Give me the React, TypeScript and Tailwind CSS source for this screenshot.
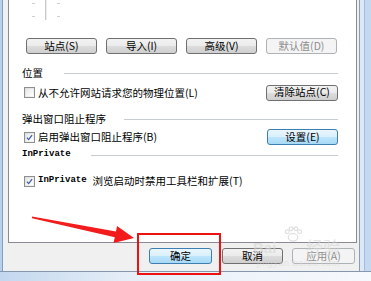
type Kind = "normal" | "blue" | "disabled";

function Btn({ label, w, kind = "normal" }: { label: string; w: string; kind?: Kind }) {
  const look =
    kind === "blue"
      ? "border-[#3c7fb1] bg-[linear-gradient(#eaf6fd,#d9f0fc_50%,#bee6fd_50%,#a7d9f5)] text-black"
      : kind === "disabled"
      ? "border-[#adb2b5] bg-[#f4f4f4] text-[#8d8d8d]"
      : "border-[#707070] bg-[linear-gradient(#f2f2f2,#ebebeb_50%,#dddddd_50%,#cfcfcf)] text-black";
  return (
    <div className={`${w} h-[16px] shrink-0 rounded-[3px] border flex items-center justify-center leading-none ${look}`}>
      {label}
    </div>
  );
}

function Check({ checked }: { checked?: boolean }) {
  return (
    <div className="w-[11px] h-[11px] border border-[#8e8f8f] bg-[linear-gradient(135deg,#dcdcdc,#f6f6f6)] p-[1px] shrink-0">
      <div className="w-full h-full bg-[linear-gradient(135deg,#e8e8e8,#ffffff)] flex items-center justify-center">
        {checked && (
          <svg width="9" height="9" viewBox="0 0 9 9">
            <path d="M1.2 4.6 L3.4 7.2 L7.8 1.4" fill="none" stroke="#3a5ea8" strokeWidth="1.6" />
          </svg>
        )}
      </div>
    </div>
  );
}

function Header({ children, ml }: { children: React.ReactNode; ml: string }) {
  return (
    <div className="flex items-center h-[18px] pl-[13px] pr-[18px]">
      {children}
      <div className={`flex-1 h-px bg-[#c5ccd3] ${ml}`} />
    </div>
  );
}

export default function App() {
  return (
    <div className="relative w-[371px] h-[281px] overflow-hidden bg-[#d6e4f3] font-['Noto_Sans_CJK_SC',sans-serif] text-[10.5px] text-black">
      <div className="flex h-[271px]">
        <div className="w-[3px] flex">
          <div className="w-[2px] bg-[#b8d0ea]" />
          <div className="w-[1px] bg-[#7f9fc4]" />
        </div>

        <div className="flex-1 bg-[#f0f0f0] pl-[5px] pr-[2px] flex flex-col">
          <div className="h-[243px] bg-white border-x border-b border-[#898c95] flex flex-col">
            <svg width="80" height="38" className="shrink-0">
              <line x1="36.5" y1="0" x2="36.5" y2="20" stroke="#c9c9c9" />
              <line x1="37.5" y1="0" x2="37.5" y2="20" stroke="#ececec" />
              <line x1="23" y1="3.5" x2="26" y2="3.5" stroke="#cfcfcf" />
              <line x1="23" y1="16.5" x2="26" y2="16.5" stroke="#cfcfcf" />
              <line x1="48" y1="3.5" x2="51" y2="3.5" stroke="#cfcfcf" />
              <line x1="48" y1="16.5" x2="51" y2="16.5" stroke="#cfcfcf" />
            </svg>

            <div className="flex gap-[9px] pl-[17px]">
              <Btn label="站点(S)" w="w-[71px]" />
              <Btn label="导入(I)" w="w-[71px]" />
              <Btn label="高级(V)" w="w-[71px]" />
              <Btn label="默认值(D)" w="w-[71px]" kind="disabled" />
            </div>

            <div className="mt-[10px]">
              <Header ml="ml-[21px]">
                <span>位置</span>
              </Header>
            </div>

            <div className="mt-[2px] h-[17px] flex items-center pl-[15px] pr-[18px]">
              <Check />
              <span className="ml-[3px] flex-1">从不允许网站请求您的物理位置(L)</span>
              <Btn label="清除站点(C)" w="w-[72px]" />
            </div>

            <div className="mt-[9px]">
              <Header ml="ml-[18px]">
                <span>弹出窗口阻止程序</span>
              </Header>
            </div>

            <div className="h-[18px] flex items-center pl-[15px] pr-[18px]">
              <Check checked />
              <span className="ml-[3px] flex-1">启用弹出窗口阻止程序(B)</span>
              <Btn label="设置(E)" w="w-[71px]" kind="blue" />
            </div>

            <Header ml="ml-[20px]">
              <span className="font-['Liberation_Mono',monospace] text-[9px] font-bold">InPrivate</span>
            </Header>

            <div className="mt-[8px] h-[18px] flex items-center pl-[15px]">
              <Check checked />
              <span className="ml-[3px] font-['Liberation_Mono',monospace] text-[9px] font-bold">InPrivate</span>
              <span className="ml-[6px]">浏览启动时禁用工具栏和扩展(T)</span>
            </div>
          </div>

          <div className="flex justify-end mt-[5px] pr-[2px]">
            <Btn label="确定" w="w-[63px]" kind="blue" />
            <div className="w-[10px]" />
            <Btn label="取消" w="w-[61px]" />
            <div className="w-[9px]" />
            <Btn label="应用(A)" w="w-[63px]" kind="disabled" />
          </div>
        </div>

        <div className="w-[12px] flex">
          <div className="w-[1px] bg-[#8d9bab]" />
          <div className="w-[4px] bg-[#dce8f5]" />
          <div className="w-[1px] bg-[#9dbfe3]" />
          <div className="flex-1 bg-[#c4d9ef]" />
        </div>
      </div>

      <div className="h-[10px] border-t border-[#8497ad] bg-[linear-gradient(90deg,#c3d7ee,#e6eff8_35%,#f6f9fc)]" />

      {/* annotation arrow */}
      <svg className="absolute left-0 top-0 pointer-events-none" width="371" height="281">
        <polygon
          points="32,216.5 116,231.4 117,226 134,238 113.5,243 114.8,237.2 32,218.2"
          fill="#f21c1c"
        />
      </svg>
      <div className="absolute left-[137px] top-[233px] w-[84px] h-[42px] border-2 border-[#ee1111]" />

      {/* watermark */}
      <span className="absolute left-[253px] top-[240px] font-['Liberation_Sans',sans-serif] text-[15px] font-bold leading-none text-[#d6d6d6] opacity-60 pointer-events-none">
        Bai
      </span>
      <svg width="20" height="17" viewBox="0 0 20 18" className="absolute left-[283px] top-[226px] opacity-70 pointer-events-none">
        <g fill="none" stroke="#cfcfcf" strokeWidth="1.2">
          <ellipse cx="10" cy="12" rx="5" ry="4" />
          <circle cx="4" cy="6" r="2" />
          <circle cx="8" cy="3" r="2" />
          <circle cx="13" cy="3" r="2" />
          <circle cx="17" cy="6" r="2" />
        </g>
      </svg>
      <span className="absolute left-[306px] top-[238px] text-[17px] leading-none text-[#d6d6d6] opacity-60 pointer-events-none">
        经验
      </span>
      <span className="absolute left-[257px] top-[259px] font-['Liberation_Sans',sans-serif] text-[9px] leading-none tracking-[0.6px] text-[#d6d6d6] opacity-50 pointer-events-none">
        jingyan.baidu.com
      </span>
    </div>
  );
}
